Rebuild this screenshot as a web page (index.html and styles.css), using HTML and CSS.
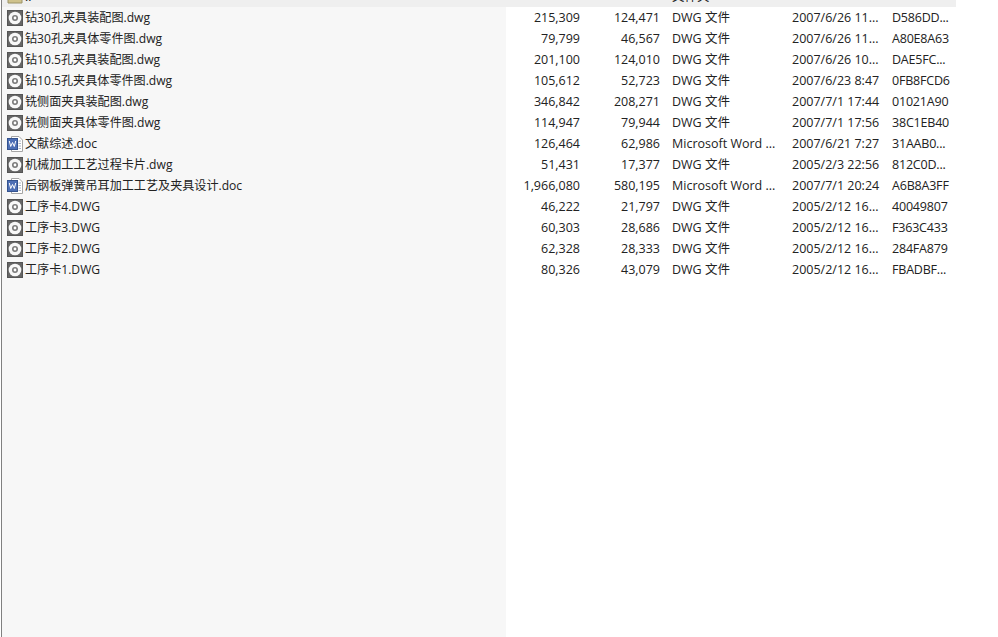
FILE: index.html
```html
<!DOCTYPE html>
<html lang="zh">
<head>
<meta charset="utf-8">
<title>文件列表</title>
<link rel="stylesheet" href="styles.css">
</head>
<body>
<svg class="defs" width="0" height="0" aria-hidden="true">
  <symbol id="dwg" viewBox="0 0 16 16">
    <rect x="0.500" y="0.500" width="15" height="15" fill="#555" stroke="#555"/>
    <rect x="1" y="1" width="14" height="14" fill="#666"/>
    <circle cx="8" cy="8" r="6.300" fill="#f8f8f8"/>
    <circle cx="8" cy="8" r="3" fill="#7a7a7a"/>
    <circle cx="8" cy="8" r="1.400" fill="#fff"/>
  </symbol>
  <symbol id="doc" viewBox="0 0 16 16">
    <path d="M4.500 0.500H12L15.500 4V15.500H4.500Z" fill="#fff" stroke="#a5a5a5"/>
    <path d="M11.500 5H14M11.500 7.500H14M11.500 10H14M11.500 12.500H14" stroke="#a9b4c6"/>
    <rect x="0.500" y="2.500" width="10" height="11" fill="#4d6fb5" stroke="#34538f"/>
    <path d="M2.300 5L3.700 10.500L5.500 6.500L7.300 10.500L8.700 5" fill="none" stroke="#fff" stroke-width="1"/>
  </symbol>
  <symbol id="folder" viewBox="0 0 16 16">
    <path d="M1 3H6L7.500 5H15V14H1Z" fill="#cfc28c" stroke="#9c9468"/>
  </symbol>
</svg>
<main class="list">
  <div class="row"><span class="name"><svg class="icon"><use href="#folder"/></svg>..</span><span class="size"></span><span class="packed"></span><span class="type">文件夹</span><span class="date"></span><span class="crc"></span></div>
  <div class="row"><span class="name"><svg class="icon"><use href="#dwg"/></svg>钻30孔夹具装配图.dwg</span><span class="size">215,309</span><span class="packed">124,471</span><span class="type">DWG 文件</span><span class="date">2007/6/26 11...</span><span class="crc">D586DD...</span></div>
  <div class="row"><span class="name"><svg class="icon"><use href="#dwg"/></svg>钻30孔夹具体零件图.dwg</span><span class="size">79,799</span><span class="packed">46,567</span><span class="type">DWG 文件</span><span class="date">2007/6/26 11...</span><span class="crc">A80E8A63</span></div>
  <div class="row"><span class="name"><svg class="icon"><use href="#dwg"/></svg>钻10.5孔夹具装配图.dwg</span><span class="size">201,100</span><span class="packed">124,010</span><span class="type">DWG 文件</span><span class="date">2007/6/26 10...</span><span class="crc">DAE5FC...</span></div>
  <div class="row"><span class="name"><svg class="icon"><use href="#dwg"/></svg>钻10.5孔夹具体零件图.dwg</span><span class="size">105,612</span><span class="packed">52,723</span><span class="type">DWG 文件</span><span class="date">2007/6/23 8:47</span><span class="crc">0FB8FCD6</span></div>
  <div class="row"><span class="name"><svg class="icon"><use href="#dwg"/></svg>铣侧面夹具装配图.dwg</span><span class="size">346,842</span><span class="packed">208,271</span><span class="type">DWG 文件</span><span class="date">2007/7/1 17:44</span><span class="crc">01021A90</span></div>
  <div class="row"><span class="name"><svg class="icon"><use href="#dwg"/></svg>铣侧面夹具体零件图.dwg</span><span class="size">114,947</span><span class="packed">79,944</span><span class="type">DWG 文件</span><span class="date">2007/7/1 17:56</span><span class="crc">38C1EB40</span></div>
  <div class="row"><span class="name"><svg class="icon"><use href="#doc"/></svg>文献综述.doc</span><span class="size">126,464</span><span class="packed">62,986</span><span class="type">Microsoft Word ...</span><span class="date">2007/6/21 7:27</span><span class="crc">31AAB0...</span></div>
  <div class="row"><span class="name"><svg class="icon"><use href="#dwg"/></svg>机械加工工艺过程卡片.dwg</span><span class="size">51,431</span><span class="packed">17,377</span><span class="type">DWG 文件</span><span class="date">2005/2/3 22:56</span><span class="crc">812C0D...</span></div>
  <div class="row"><span class="name"><svg class="icon"><use href="#doc"/></svg>后钢板弹簧吊耳加工工艺及夹具设计.doc</span><span class="size">1,966,080</span><span class="packed">580,195</span><span class="type">Microsoft Word ...</span><span class="date">2007/7/1 20:24</span><span class="crc">A6B8A3FF</span></div>
  <div class="row"><span class="name"><svg class="icon"><use href="#dwg"/></svg>工序卡4.DWG</span><span class="size">46,222</span><span class="packed">21,797</span><span class="type">DWG 文件</span><span class="date">2005/2/12 16...</span><span class="crc">40049807</span></div>
  <div class="row"><span class="name"><svg class="icon"><use href="#dwg"/></svg>工序卡3.DWG</span><span class="size">60,303</span><span class="packed">28,686</span><span class="type">DWG 文件</span><span class="date">2005/2/12 16...</span><span class="crc">F363C433</span></div>
  <div class="row"><span class="name"><svg class="icon"><use href="#dwg"/></svg>工序卡2.DWG</span><span class="size">62,328</span><span class="packed">28,333</span><span class="type">DWG 文件</span><span class="date">2005/2/12 16...</span><span class="crc">284FA879</span></div>
  <div class="row"><span class="name"><svg class="icon"><use href="#dwg"/></svg>工序卡1.DWG</span><span class="size">80,326</span><span class="packed">43,079</span><span class="type">DWG 文件</span><span class="date">2005/2/12 16...</span><span class="crc">FBADBF...</span></div>
</main>
</body>
</html>
```
FILE: styles.css
```css
html, body {
  margin: 0;
  height: 100%;
  overflow: hidden;
  background: #fff;
}
.defs { display: block; height: 0; }
.list {
  height: 100%;
  width: 997px;
  margin-left: 1px;
  box-sizing: border-box;
  border-left: 1px solid #808080;
  background: linear-gradient(to right, #f7f7f7 504px, #fff 504px);
  font: 12.5px/21px "Open Sans", "Noto Sans CJK SC", sans-serif;
  color: #222;
  overflow: hidden;
}
.row {
  display: grid;
  grid-template-columns: 504px 74px 80px 120px 112px 64px;
  width: 954px;
  height: 21px;
  white-space: nowrap;
}
.row:first-child {
  margin-top: -14px;
  background: #efefef;
}
.name {
  display: flex;
  align-items: center;
  gap: 2px;
  padding-left: 5px;
  font-size: 12.1px;
}
.icon { width: 16px; height: 16px; flex: none; }
.size, .packed { text-align: right; }
.type { padding-left: 12px; }
.date { padding-left: 12px; }
.crc { letter-spacing: -0.2px; }
```
